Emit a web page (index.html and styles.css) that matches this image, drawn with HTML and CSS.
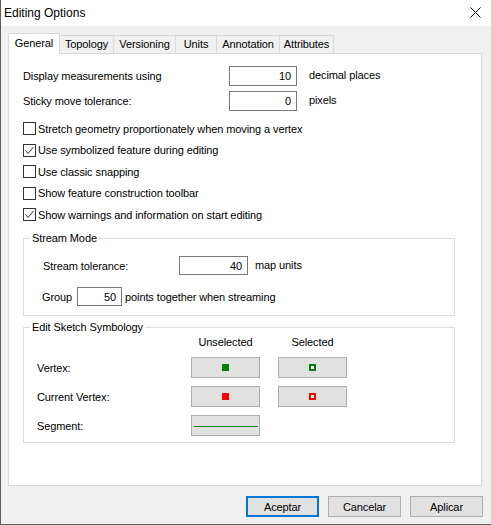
FILE: index.html
```html
<!DOCTYPE html>
<html>
<head>
<meta charset="utf-8">
<link rel="stylesheet" href="styles.css">
</head>
<body>
<div class="window">
  <div class="titlebar">
    <span class="title">Editing Options</span>
    <svg class="close" width="11" height="11" viewBox="0 0 11 11"><path d="M0.5 0.5 L10.5 10.5 M10.5 0.5 L0.5 10.5" stroke="#000" stroke-width="1" fill="none"/></svg>
  </div>
  <div class="body">
    <div class="tabs">
      <div class="tab active t-general">General</div>
      <div class="tab t-topology">Topology</div>
      <div class="tab t-versioning">Versioning</div>
      <div class="tab t-units">Units</div>
      <div class="tab t-annotation">Annotation</div>
      <div class="tab t-attributes">Attributes</div>
    </div>
    <div class="panel">
      <div class="field-row first">
        <span class="label main-label">Display measurements using</span>
        <span class="textbox main-box">10</span>
        <span class="unit">decimal places</span>
      </div>
      <div class="field-row second">
        <span class="label main-label">Sticky move tolerance:</span>
        <span class="textbox main-box">0</span>
        <span class="unit">pixels</span>
      </div>
      <div class="checks">
        <div class="check"><span class="box"></span><span>Stretch geometry proportionately when moving a vertex</span></div>
        <div class="check"><span class="box"><svg width="11" height="11" viewBox="0 0 11 11"><path d="M1.5 5.5 L4 8.5 L9.5 2" stroke="#333" stroke-width="1" fill="none"/></svg></span><span>Use symbolized feature during editing</span></div>
        <div class="check"><span class="box"></span><span>Use classic snapping</span></div>
        <div class="check"><span class="box"></span><span>Show feature construction toolbar</span></div>
        <div class="check"><span class="box"><svg width="11" height="11" viewBox="0 0 11 11"><path d="M1.5 5.5 L4 8.5 L9.5 2" stroke="#333" stroke-width="1" fill="none"/></svg></span><span>Show warnings and information on start editing</span></div>
      </div>
      <div class="group stream">
        <span class="group-title">Stream Mode</span>
        <div class="field-row">
          <span class="label stream-label">Stream tolerance:</span>
          <span class="textbox stream-box">40</span>
          <span class="unit near">map units</span>
        </div>
        <div class="field-row group-row">
          <span class="label group-label">Group</span>
          <span class="textbox small-box">50</span>
          <span class="unit tight">points together when streaming</span>
        </div>
      </div>
      <div class="group sketch">
        <span class="group-title">Edit Sketch Symbology</span>
        <div class="sym-grid">
          <span></span>
          <span class="col-head">Unselected</span>
          <span class="col-head">Selected</span>

          <span class="sym-label">Vertex:</span>
          <span class="sym-btn"><span class="sq fill green"></span></span>
          <span class="sym-btn"><span class="sq hollow green-b"></span></span>

          <span class="sym-label">Current Vertex:</span>
          <span class="sym-btn"><span class="sq fill red"></span></span>
          <span class="sym-btn"><span class="sq hollow red-b"></span></span>

          <span class="sym-label">Segment:</span>
          <span class="sym-btn"><span class="seg"></span></span>
          <span></span>
        </div>
      </div>
    </div>
    <div class="actions">
      <span class="btn default">Aceptar</span>
      <span class="btn">Cancelar</span>
      <span class="btn">Aplicar</span>
    </div>
  </div>
</div>
</body>
</html>
```
FILE: styles.css
```css
* { box-sizing: border-box; }
html, body { margin: 0; padding: 0; background: #f0f0f0; }
body {
  font-family: "Liberation Sans", Arial, sans-serif;
  font-size: 11px;
  letter-spacing: -0.1px;
  color: #000;
}
.window {
  width: 491px;
  height: 525px;
  border-left: 1px solid #5e5e5e;
  border-bottom: 1px solid #5e5e5e;
  background: #f0f0f0;
  display: flex;
  flex-direction: column;
}
.titlebar {
  height: 26px;
  background: #fff;
  display: flex;
  align-items: center;
  justify-content: space-between;
  padding: 0 10px 0 3px;
}
.title { font-size: 12px; line-height: 16px; letter-spacing: 0; }
.close { display: block; margin-top: -1px; }

.body {
  flex: 1;
  padding: 7px 8px 7px 7px;
  display: flex;
  flex-direction: column;
}
.tabs {
  display: flex;
  align-items: flex-end;
  height: 20px;
  position: relative;
  z-index: 1;
}
.tab {
  height: 18px;
  line-height: 17px;
  text-align: center;
  background: #f0f0f0;
  border: 1px solid #d9d9d9;
  border-bottom: none;
  margin-left: -1px;
  white-space: nowrap;
}
.tab.active {
  height: 21px;
  margin-bottom: -1px;
  margin-left: 0;
  background: #fff;
  line-height: 18px;
  position: relative;
  z-index: 2;
}
.t-general { width: 52px; }
.t-topology { width: 55px; }
.t-versioning { width: 63px; }
.t-units { width: 42px; }
.t-annotation { width: 64px; }
.t-attributes { width: 55px; }

.panel {
  height: 433px;
  width: 474px;
  background: #fff;
  border: 1px solid #d9d9d9;
  padding: 12px 0 0 14px;
}
.field-row {
  display: flex;
  align-items: center;
  height: 20px;
}
.field-row.second { margin-top: 5px; }
.label { display: block; }
.main-label { width: 206px; }
.textbox {
  display: block;
  height: 20px;
  border: 1px solid #7a7a7a;
  background: #fff;
  text-align: right;
  padding-right: 5px;
  line-height: 18px;
}
.main-box { width: 68px; }
.unit { margin-left: 12px; margin-top: -3px; }

.checks {
  margin-top: 11px;
  display: flex;
  flex-direction: column;
  gap: 8.5px;
}
.check {
  display: flex;
  align-items: center;
  height: 13px;
  gap: 2px;
}
.box {
  width: 13px;
  height: 13px;
  border: 1px solid #333;
  background: #fff;
  display: block;
  flex: none;
}
.box svg { display: block; }

.group {
  position: relative;
  width: 432px;
  border: 1px solid #dcdcdc;
}
.group-title {
  position: absolute;
  top: -8px;
  left: 6px;
  padding: 0 2px;
  background: #fff;
  line-height: 14px;
}
.stream {
  margin-top: 17px;
  padding: 17px 0 9px 19px;
}
.stream .field-row { height: 19px; }
.stream .field-row + .field-row { margin-top: 12px; }
.stream-label { width: 136px; }
.stream-box { width: 69px; height: 19px; }
.unit.near { margin-left: 7px; margin-top: -2px; }
.group-row { margin-left: -1px; }
.group-label { width: 35px; }
.small-box { width: 45px; height: 19px; }
.unit.tight { margin-left: 3px; margin-top: 0; }

.sketch {
  margin-top: 11px;
  padding: 7px 0 6px 13px;
}
.sym-grid {
  display: grid;
  grid-template-columns: 136px 69px 69px;
  grid-template-rows: 14px 21px 21px 21px;
  column-gap: 18px;
  row-gap: 8px;
  align-items: center;
}
.col-head { text-align: center; line-height: 14px; }
.sym-label { line-height: 14px; }
.sym-btn {
  height: 21px;
  background: #e1e1e1;
  border: 1px solid #adadad;
  display: flex;
  align-items: center;
  justify-content: center;
}
.sq { display: block; width: 7px; height: 7px; }
.fill.green { background: #008000; }
.fill.red { background: #ff0000; }
.hollow { border: 2px solid; background: #fff; }
.green-b { border-color: #008000; }
.red-b { border-color: #ff0000; }
.seg { display: block; width: 64px; height: 1px; background: #0a8a0a; margin-top: 1px; }

.actions {
  margin-top: 10px;
  display: flex;
  justify-content: flex-end;
  gap: 9px;
}
.btn {
  display: flex;
  align-items: center;
  justify-content: center;
  width: 73px;
  height: 21px;
  background: #e1e1e1;
  border: 1px solid #adadad;
}
.btn.default { border: 2px solid #0078d7; }
```
